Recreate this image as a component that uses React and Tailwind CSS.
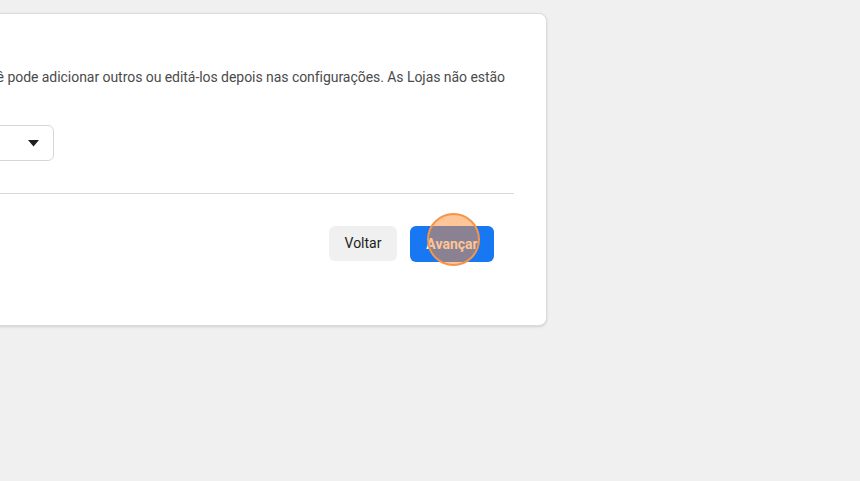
import React from "react";

function Caret() {
  return (
    <svg width="11" height="7" viewBox="0 0 11 7" className="shrink-0">
      <path d="M0 0 L11 0 L5.5 6.5 Z" fill="#1c1e21" />
    </svg>
  );
}

export default function App() {
  return (
    <div className="w-[860px] h-[481px] bg-[#f0f0f0] overflow-hidden font-['Roboto',sans-serif]">
      <div className="pt-[13px]">
        <div className="-ml-[399px] w-[946px] h-[313px] bg-white rounded-[8px] border border-[#dcdcdc] shadow-sm">
          <div className="px-8 pt-[54px]">
            <div className="flex justify-end pr-[9px] overflow-hidden">
              <p className="whitespace-nowrap text-[14px] leading-[18px] tracking-[-0.05px] text-[#4b4b4b] shrink-0">
                Para começar, adicionamos alguns itens para você. Você pode adicionar outros ou editá-los depois nas configurações. As Lojas não estão
              </p>
            </div>
            <div className="mt-[39px] w-[420px] h-[36px] rounded-[6px] border border-[#d6d6d6] flex items-center justify-end pr-[14px]">
              <Caret />
            </div>
            <div className="mt-[32px] border-t border-[#d9d9d9]" />
            <div className="flex justify-end gap-[13px] pr-5 pt-[32px]">
              <button className="h-[35px] w-[68px] rounded-[6px] bg-[#f0f0f0] text-[14px] font-normal text-[#1c1e21]">
                Voltar
              </button>
              <div className="relative">
                <button className="h-[36px] w-[84px] rounded-[6px] bg-[#1877f2] text-[14px] font-bold text-white">
                  Avançar
                </button>
                <div className="absolute left-[17px] top-[-13px] w-[53px] h-[53px] rounded-full bg-[#fb8c32]/50 border-2 border-[#f4954a]" />
              </div>
            </div>
          </div>
        </div>
      </div>
    </div>
  );
}
